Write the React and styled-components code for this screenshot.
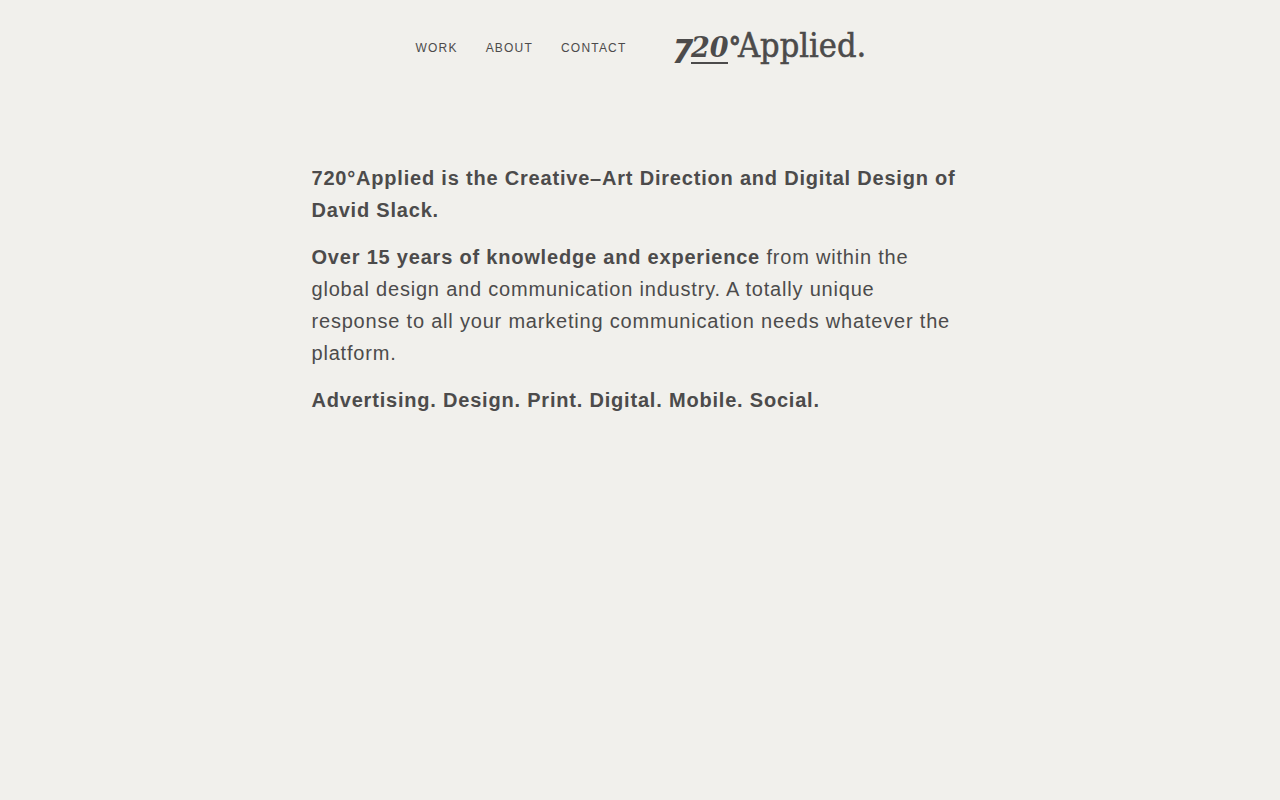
import React from 'react';
import styled, { createGlobalStyle } from 'styled-components';

const GlobalStyle = createGlobalStyle`
  body {
    margin: 0;
    background: #f1f0ec;
    color: #4c4b4b;
    font-family: "Liberation Sans", Arial, sans-serif;
  }
`;

const Header = styled.header`
  display: flex;
  flex-wrap: wrap;
  justify-content: center;
  align-items: center;
  column-gap: 46px;
  padding: 24px 20px;
`;

const Nav = styled.nav`
  display: flex;
  gap: 28px;
`;

const NavLink = styled.a`
  color: inherit;
  font-size: 12px;
  line-height: 16px;
  letter-spacing: 0.1em;
  text-transform: uppercase;
  text-decoration: none;
`;

const LogoLink = styled.a`
  display: block;
  color: inherit;
`;

const LogoArt = styled.svg`
  display: block;
  fill: currentColor;
  font-family: "DejaVu Serif Condensed", "DejaVu Serif", serif;
`;

const LogoNumerals = styled.g`
  font-weight: 700;
  font-style: italic;
`;

const LogoWord = styled.text`
  font-size: 34px;
  stroke: currentColor;
  stroke-width: 0.5;
`;

const Main = styled.main`
  box-sizing: border-box;
  max-width: 697px;
  margin: 0 auto;
  padding: 66px 20px;
`;

const Paragraph = styled.p`
  margin: 0 0 15px;
  font-size: 20px;
  line-height: 32px;
  letter-spacing: 0.04em;
`;

function Logo() {
  return (
    <LogoArt width="192" height="48" viewBox="0 0 192 48" role="img" aria-label="720°Applied.">
      <LogoNumerals>
        <text x="0" y="39" fontSize="34" fontFamily="Open Sans, sans-serif">7</text>
        <text x="18" y="33" fontSize="27" fontFamily="DejaVu Serif, serif">20</text>
      </LogoNumerals>
      <rect x="18" y="38" width="37" height="2" />
      <text x="56" y="32" fontSize="26" fontWeight="700" stroke="currentColor" strokeWidth="0.8">°</text>
      <LogoWord x="65" y="33">Applied.</LogoWord>
    </LogoArt>
  );
}

export default function App() {
  return (
    <>
      <GlobalStyle />
      <Header>
        <Nav aria-label="Main">
          <NavLink href="#work">Work</NavLink>
          <NavLink href="#about">About</NavLink>
          <NavLink href="#contact">Contact</NavLink>
        </Nav>
        <LogoLink href="#home">
          <Logo />
        </LogoLink>
      </Header>
      <Main>
        <Paragraph>
          <strong>720°Applied is the Creative–Art Direction and Digital Design of David Slack.</strong>
        </Paragraph>
        <Paragraph>
          <strong>Over 15 years of knowledge and experience</strong> from within the global design and
          communication industry. A totally unique response to all your marketing communication needs
          whatever the platform.
        </Paragraph>
        <Paragraph>
          <strong>Advertising. Design. Print. Digital. Mobile. Social.</strong>
        </Paragraph>
      </Main>
    </>
  );
}
